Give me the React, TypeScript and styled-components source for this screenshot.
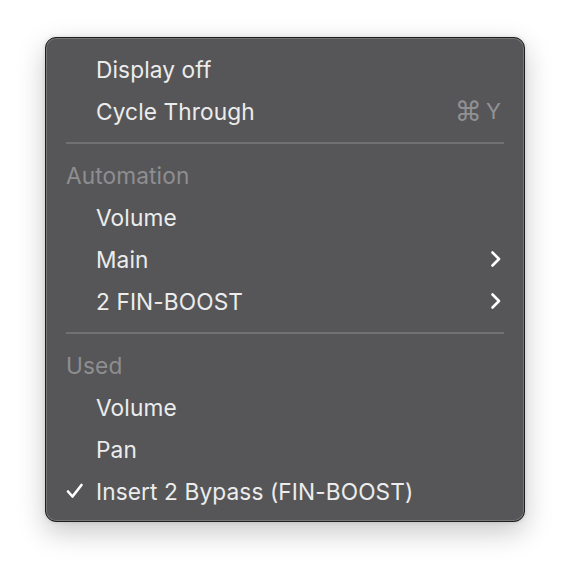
import React from "react";
import styled, { createGlobalStyle } from "styled-components";

const GlobalStyle = createGlobalStyle`
  html, body {
    margin: 0;
    padding: 0;
    background: #ffffff;
  }
  body {
    font-family: Inter, "Noto Sans", sans-serif;
  }
`;

const Page = styled.div`
  width: 570px;
  height: 576px;
  padding: 37px 0 0 45px;
  box-sizing: border-box;
`;

const Menu = styled.div`
  width: 480px;
  height: 485px;
  box-sizing: border-box;
  background: #565658;
  border: 1px solid #1f1f1f;
  border-radius: 11px;
  box-shadow: inset 0 0 0 1px #767678, 0 10px 28px rgba(0, 0, 0, 0.22),
    0 0 4px rgba(0, 0, 0, 0.12);
  padding: 10px 20px 9px 20px;
  display: flex;
  flex-direction: column;
`;

const Row = styled.div<{ $header?: boolean }>`
  height: 42px;
  display: flex;
  align-items: center;
  font-size: 22.7px;
  color: ${(p) => (p.$header ? "#8e8e90" : "#ececec")};
  letter-spacing: 0.1px;
`;

const Check = styled.span`
  width: 30px;
  flex-shrink: 0;
  display: flex;
  align-items: center;
`;

const Label = styled.span`
  flex: 1;
`;

const Shortcut = styled.span`
  color: #919193;
  font-size: 22px;
  display: flex;
  align-items: center;
  gap: 4px;
  padding-right: 3px;
`;

const CommandKey = styled.span`
  font-family: "DejaVu Sans", sans-serif;
  font-size: 27px;
  line-height: 1;
`;

const Separator = styled.div`
  height: 22px;
  display: flex;
  align-items: center;

  &::after {
    content: "";
    display: block;
    width: 100%;
    height: 2px;
    background: #717173;
  }
`;

const Chevron = () => (
  <svg width="12" height="18" viewBox="0 0 12 18" style={{ marginRight: 2 }}>
    <path
      d="M2.5 2.5 L9 9 L2.5 15.5"
      fill="none"
      stroke="#ffffff"
      strokeWidth="2.6"
      strokeLinecap="round"
      strokeLinejoin="round"
    />
  </svg>
);

const CheckMark = () => (
  <svg width="18" height="16" viewBox="0 0 18 16">
    <path
      d="M2 8.5 L6.5 13.5 L15.5 2"
      fill="none"
      stroke="#ffffff"
      strokeWidth="2.6"
      strokeLinecap="round"
      strokeLinejoin="round"
    />
  </svg>
);

type Item = {
  label: string;
  header?: boolean;
  checked?: boolean;
  submenu?: boolean;
  shortcut?: string;
};

const sections: Item[][] = [
  [{ label: "Display off" }, { label: "Cycle Through", shortcut: "Y" }],
  [
    { label: "Automation", header: true },
    { label: "Volume" },
    { label: "Main", submenu: true },
    { label: "2 FIN-BOOST", submenu: true },
  ],
  [
    { label: "Used", header: true },
    { label: "Volume" },
    { label: "Pan" },
    { label: "Insert 2 Bypass (FIN-BOOST)", checked: true },
  ],
];

export default function App() {
  return (
    <Page>
      <GlobalStyle />
      <Menu>
        {sections.map((section, si) => (
          <React.Fragment key={si}>
            {si > 0 && <Separator />}
            {section.map((item, i) =>
              item.header ? (
                <Row key={i} $header>
                  {item.label}
                </Row>
              ) : (
                <Row key={i}>
                  <Check>{item.checked && <CheckMark />}</Check>
                  <Label>{item.label}</Label>
                  {item.shortcut && (
                    <Shortcut>
                      <CommandKey>⌘</CommandKey>
                      <span>{item.shortcut}</span>
                    </Shortcut>
                  )}
                  {item.submenu && <Chevron />}
                </Row>
              )
            )}
          </React.Fragment>
        ))}
      </Menu>
    </Page>
  );
}
